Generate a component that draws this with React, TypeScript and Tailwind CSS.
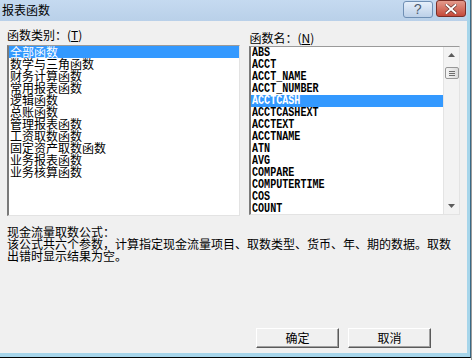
import React from "react";

const cjk = { fontFamily: '"Noto Sans CJK SC", "Liberation Sans", sans-serif' };
const mono = { fontFamily: '"Liberation Mono", "DejaVu Sans Mono", monospace' };

const categories = [
    "全部函数",
    "数学与三角函数",
    "财务计算函数",
    "常用报表函数",
    "逻辑函数",
    "总账函数",
    "管理报表函数",
    "工资取数函数",
    "固定资产取数函数",
    "业务报表函数",
    "业务核算函数",
];

const functions = [
    "ABS",
    "ACCT",
    "ACCT_NAME",
    "ACCT_NUMBER",
    "ACCTCASH",
    "ACCTCASHEXT",
    "ACCTEXT",
    "ACCTNAME",
    "ATN",
    "AVG",
    "COMPARE",
    "COMPUTERTIME",
    "COS",
    "COUNT",
];

const DialogButton = ({ children }: { children: React.ReactNode }) => (
    <button className="w-[83px] h-[20px] bg-[#f0f0f0] border border-t-white border-l-white border-r-[#5a5a5a] border-b-[#5a5a5a] shadow-[inset_-1px_-1px_0_#a0a0a0] text-[12px] leading-[12px] text-black flex items-center justify-center">
        {children}
    </button>
);

const ScrollBar = () => (
    <div className="w-[16px] h-full bg-[#f3f3f3] border-l border-[#e4e4e4] flex flex-col items-center">
        <div className="h-[16px] w-full flex items-center justify-center">
            <svg width="7" height="4" viewBox="0 0 7 4">
                <path d="M3.5 0 L7 4 L0 4 Z" fill="#5c5c5c" />
            </svg>
        </div>
        <div className="mt-[4px] w-[14px] h-[12px] rounded-[2px] border border-[#979797] bg-gradient-to-r from-[#f4f4f4] to-[#dcdcdc] flex flex-col items-center justify-center gap-[1px]">
            <div className="w-[6px] h-[1px] bg-[#6e6e6e]" />
            <div className="w-[6px] h-[1px] bg-[#6e6e6e]" />
            <div className="w-[6px] h-[1px] bg-[#6e6e6e]" />
        </div>
        <div className="flex-1" />
        <div className="h-[16px] w-full flex items-center justify-center">
            <svg width="7" height="4" viewBox="0 0 7 4">
                <path d="M0 0 L7 0 L3.5 4 Z" fill="#5c5c5c" />
            </svg>
        </div>
    </div>
);

const App = () => {
    return (
        <div className="w-[472px] h-[360px] bg-white flex overflow-hidden" style={cjk}>
            <div className="w-[471px] h-[358px] border-r border-b border-r-[#3a6a86] border-b-black flex-shrink-0">
                <div className="w-full h-full border-r-[3px] border-b-[4px] border-[#a6d5ea] bg-[#f0f0f0] flex flex-col">
                    {/* title bar */}
                    <div className="h-[21px] flex items-start bg-gradient-to-b from-[#c5daf0] to-[#b9d0e9]">
                        <span className="pl-[2px] pt-[4px] text-[12px] leading-[12px] text-black">报表函数</span>
                        <div className="flex-1" />
                        <div className="mt-[1px] w-[30px] h-[17px] rounded-[3px] border border-[#6f8fb4] bg-gradient-to-b from-[#e6effa] to-[#bcd0e8] flex items-center justify-center text-[14px] leading-[14px] text-[#4d5b6e]" style={mono}>
                            ?
                        </div>
                        <div className="ml-[3px] mr-[1px] w-[30px] h-[17px] rounded-[3px] border border-[#7a2e26] bg-gradient-to-b from-[#e39a8c] to-[#c4493b] flex items-center justify-center">
                            <svg width="12" height="10" viewBox="0 0 12 10">
                                <path d="M1.5 1 L10.5 9 M10.5 1 L1.5 9" stroke="#5a2620" strokeWidth="3.2" strokeLinecap="square" />
                                <path d="M1.5 1 L10.5 9 M10.5 1 L1.5 9" stroke="#ffffff" strokeWidth="2" strokeLinecap="square" />
                            </svg>
                        </div>
                    </div>

                    {/* body */}
                    <div className="flex-1 flex flex-col px-[7px]">
                        <div className="mt-[8px] flex items-start gap-[9px]">
                            <div className="w-[236px] flex flex-col">
                                <div className="h-[12px] text-[12px] leading-[12px] text-black whitespace-nowrap">
                                    函数类别：(<u>T</u>)
                                </div>
                                <div className="mt-[4px] h-[171px] bg-white border-t border-l-2 border-r border-b border-t-[#9a9a9a] border-l-[#7a7a7a] border-r-[#e3e3e3] border-b-[#e3e3e3] overflow-hidden">
                                    {categories.map((c, i) => (
                                        <div
                                            key={c}
                                            className={`h-[12px] pl-[1px] text-[12px] leading-[12px] whitespace-nowrap ${i === 0 ? "bg-[#3399ff] text-white" : "text-black"}`}
                                        >
                                            {c}
                                        </div>
                                    ))}
                                </div>
                            </div>

                            <div className="w-[213px] flex flex-col pt-[3px]">
                                <div className="h-[12px] text-[12px] leading-[12px] text-black whitespace-nowrap">
                                    函数名：(<u>N</u>)
                                </div>
                                <div className="mt-[2px] h-[169px] bg-white border-t border-l-2 border-r border-b border-t-[#9a9a9a] border-l-[#7a7a7a] border-r-[#e3e3e3] border-b-[#e3e3e3] flex overflow-hidden">
                                    <div className="flex-1 overflow-hidden">
                                        {functions.map((f) => (
                                            <div
                                                key={f}
                                                className={`h-[12px] pl-[1px] flex items-center overflow-hidden text-[12px] leading-[12px] whitespace-nowrap ${f === "ACCTCASH" ? "bg-[#3399ff] text-white" : "text-black"}`}
                                                style={mono}
                                            >
                                                <span className="block origin-left scale-x-[0.84] font-bold">
                                                    {f}
                                                </span>
                                            </div>
                                        ))}
                                    </div>
                                    <ScrollBar />
                                </div>
                            </div>
                        </div>

                        <div className="mt-[10px] text-[12px] leading-[12px] text-black whitespace-nowrap">
                            现金流量取数公式：
                            <br />
                            该公式共六个参数，计算指定现金流量项目、取数类型、货币、年、期的数据。取数
                            <br />
                            出错时显示结果为空。
                        </div>

                        <div className="mt-[66px] mr-[29px] flex justify-end gap-[9px]">
                            <DialogButton>确定</DialogButton>
                            <DialogButton>取消</DialogButton>
                        </div>
                    </div>
                </div>
            </div>
            <div className="flex-1 bg-[#9c9c9c]" />
        </div>
    );
};

export default App;
